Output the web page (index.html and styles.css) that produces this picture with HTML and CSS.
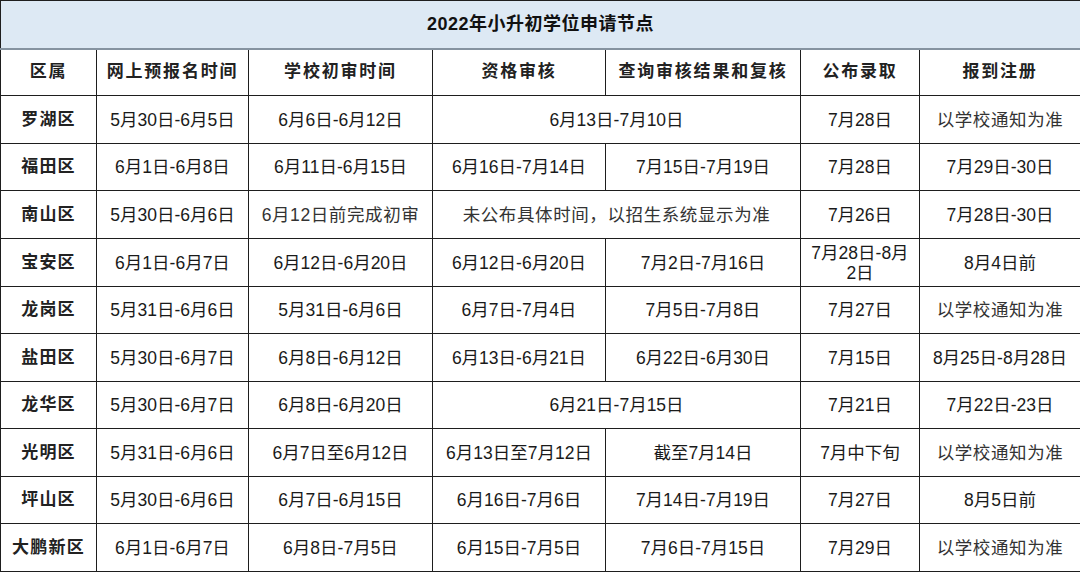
FILE: index.html
```html
<!DOCTYPE html>
<html lang="zh-CN">
<head>
<meta charset="utf-8">
<title>2022年小升初学位申请节点</title>
<link rel="stylesheet" href="styles.css">
</head>
<body>
<table class="sched">
  <colgroup>
    <col class="c1"><col class="c2"><col class="c3"><col class="c4"><col class="c5"><col class="c6"><col class="c7">
  </colgroup>
  <thead>
    <tr class="title-row"><th colspan="7" class="title">2022年小升初学位申请节点</th></tr>
    <tr class="head-row">
      <th>区属</th><th>网上预报名时间</th><th>学校初审时间</th><th>资格审核</th><th>查询审核结果和复核</th><th>公布录取</th><th>报到注册</th>
    </tr>
  </thead>
  <tbody>
    <tr class="r48"><th>罗湖区</th><td>5月30日-6月5日</td><td>6月6日-6月12日</td><td colspan="2">6月13日-7月10日</td><td>7月28日</td><td class="note">以学校通知为准</td></tr>
    <tr class="r47 soft"><th>福田区</th><td>6月1日-6月8日</td><td>6月11日-6月15日</td><td>6月16日-7月14日</td><td>7月15日-7月19日</td><td>7月28日</td><td>7月29日-30日</td></tr>
    <tr class="r48"><th>南山区</th><td>5月30日-6月6日</td><td class="note">6月12日前完成初审</td><td colspan="2" class="note">未公布具体时间，以招生系统显示为准</td><td>7月26日</td><td>7月28日-30日</td></tr>
    <tr class="r48"><th>宝安区</th><td>6月1日-6月7日</td><td>6月12日-6月20日</td><td>6月12日-6月20日</td><td>7月2日-7月16日</td><td class="wrap">7月28日-8月<br>2日</td><td>8月4日前</td></tr>
    <tr class="r47 soft"><th>龙岗区</th><td>5月31日-6月6日</td><td>5月31日-6月6日</td><td>6月7日-7月4日</td><td>7月5日-7月8日</td><td>7月27日</td><td class="note">以学校通知为准</td></tr>
    <tr class="r48"><th>盐田区</th><td>5月30日-6月7日</td><td>6月8日-6月12日</td><td>6月13日-6月21日</td><td>6月22日-6月30日</td><td>7月15日</td><td>8月25日-8月28日</td></tr>
    <tr class="r47 soft"><th>龙华区</th><td>5月30日-6月7日</td><td>6月8日-6月20日</td><td colspan="2">6月21日-7月15日</td><td>7月21日</td><td>7月22日-23日</td></tr>
    <tr class="r48"><th>光明区</th><td>5月31日-6月6日</td><td>6月7日至6月12日</td><td>6月13日至7月12日</td><td>截至7月14日</td><td>7月中下旬</td><td class="note">以学校通知为准</td></tr>
    <tr class="r47 soft"><th>坪山区</th><td>5月30日-6月6日</td><td>6月7日-6月15日</td><td>6月16日-7月6日</td><td>7月14日-7月19日</td><td>7月27日</td><td>8月5日前</td></tr>
    <tr class="r48"><th>大鹏新区</th><td>6月1日-6月7日</td><td>6月8日-7月5日</td><td>6月15日-7月5日</td><td>7月6日-7月15日</td><td>7月29日</td><td class="note">以学校通知为准</td></tr>
  </tbody>
</table>
</body>
</html>
```

FILE: styles.css
```css
html, body {
  margin: 0;
  padding: 0;
  background: #ffffff;
}

.sched {
  width: 1080px;
  border-collapse: collapse;
  table-layout: fixed;
  font-family: "Liberation Sans", "Noto Sans CJK SC", sans-serif;
  font-size: 17.5px;
  color: #1a1a1a;
}

.c1 { width: 96px; }
.c2 { width: 152px; }
.c3 { width: 184px; }
.c4 { width: 173px; }
.c5 { width: 195px; }
.c6 { width: 119px; }
.c7 { width: 161px; }

.sched th,
.sched td {
  border: 1px solid #1e1e1e;
  text-align: center;
  vertical-align: middle;
  padding: 0;
  white-space: nowrap;
  line-height: 20px;
}

.title-row { height: 48px; }
.title {
  background: #dde9f4;
  font-weight: 700;
  font-size: 18px;
  letter-spacing: 0.5px;
  color: #111;
  border-bottom: 2px solid #8593a0 !important;
}

.head-row { height: 47px; }
.head-row th {
  font-weight: 700;
  font-size: 17px;
  letter-spacing: 1.8px;
  color: #222;
}

.r48 { height: 48px; }
.r47 { height: 47px; }

.sched tbody th {
  font-weight: 700;
  font-size: 17px;
  letter-spacing: 1.2px;
  color: #222;
}

.soft th, .soft td {
  border-top-color: #8a8a8a;
}

.note {
  color: #333;
  letter-spacing: 0.6px;
}

.wrap {
  white-space: normal;
  line-height: 19px;
}
```
